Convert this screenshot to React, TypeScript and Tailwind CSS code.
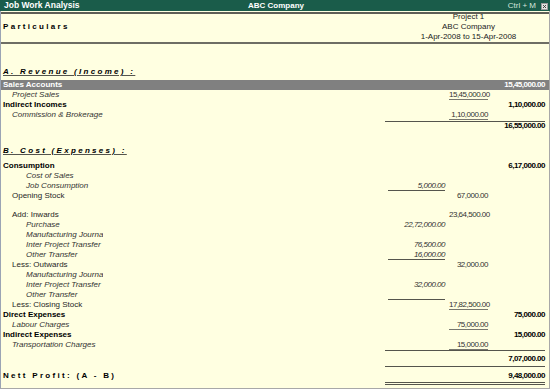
import React from "react";

type Kind = "group" | "item" | "plain";

interface RowData {
  label?: string;
  kind?: Kind;
  indent?: 0 | 1 | 2;
  c1?: string;
  c2?: string;
  c3?: string;
  line1?: boolean;
  line2?: boolean;
  clip?: boolean;
  bar?: boolean;
}

const indentClass = { 0: "pl-[2px]", 1: "pl-[11px]", 2: "pl-[25px]" };

const kindClass: Record<Kind, string> = {
  group: "font-bold text-black",
  item: "italic text-[#333]",
  plain: "text-[#262626]",
};

function Row({ r }: { r: RowData }) {
  const kind = r.kind ?? "item";
  return (
    <div className={`flex h-[10px] leading-[10px] ${r.bar ? "bg-[#808080] text-white" : ""}`}>
      <div
        className={`flex-1 min-w-0 overflow-hidden whitespace-nowrap ${indentClass[r.indent ?? 0]} ${
          r.bar ? "font-bold text-white" : kindClass[kind]
        }`}
      >
        {r.clip ? <span className="block w-[77px] overflow-hidden">{r.label}</span> : r.label}
      </div>
      <div
        className={`w-[57px] text-right tracking-[-0.5px] italic text-[#333] ${
          r.line1 ? "border-b border-[#55554d]" : ""
        }`}
      >
        {r.c1}
      </div>
      <div className="w-[4px]" />
      <div
        className={`w-[39px] text-right tracking-[-0.5px] text-[#333] ${
          r.line2 ? "border-b border-[#77776e]" : ""
        }`}
      >
        {r.c2}
      </div>
      <div className={`w-[57px] text-right tracking-[-0.5px] font-bold ${r.bar ? "text-white" : "text-black"}`}>
        {r.c3}
      </div>
      <div className="w-[4px]" />
    </div>
  );
}

function Rule() {
  return (
    <div className="flex">
      <div className="flex-1" />
      <div className="w-[160px] border-t border-[#55554d]" />
      <div className="w-[4px]" />
    </div>
  );
}

function Heading({ text }: { text: string }) {
  return (
    <div className="h-[10px] leading-[10px] pl-[2px] whitespace-nowrap">
      <span className="font-bold italic tracking-[2.3px] text-black underline underline-offset-[1px] decoration-[#55554d]">
        {text}
      </span>
    </div>
  );
}

const costRows: RowData[] = [
  { label: "Consumption", kind: "group", c3: "6,17,000.00" },
  { label: "Cost of Sales", indent: 2 },
  { label: "Job Consumption", indent: 2, c1: "5,000.00", line1: true },
  { label: "Opening Stock", kind: "plain", indent: 1, c2: "67,000.00" },
];

const moveRows: RowData[] = [
  { label: "Add: Inwards", kind: "plain", indent: 1, c2: "23,64,500.00" },
  { label: "Purchase", indent: 2, c1: "22,72,000.00" },
  { label: "Manufacturing Journal", indent: 2, clip: true },
  { label: "Inter Project Transfer", indent: 2, clip: true, c1: "76,500.00" },
  { label: "Other Transfer", indent: 2, c1: "16,000.00", line1: true },
  { label: "Less: Outwards", kind: "plain", indent: 1, c2: "32,000.00" },
  { label: "Manufacturing Journal", indent: 2, clip: true },
  { label: "Inter Project Transfer", indent: 2, clip: true, c1: "32,000.00" },
  { label: "Other Transfer", indent: 2, line1: true },
  { label: "Less: Closing Stock", kind: "plain", indent: 1, c2: "17,82,500.00", line2: true },
  { label: "Direct Expenses", kind: "group", c3: "75,000.00" },
  { label: "Labour Charges", indent: 1, c2: "75,000.00", line2: true },
  { label: "Indirect Expenses", kind: "group", c3: "15,000.00" },
  { label: "Transportation Charges", indent: 1, c2: "15,000.00", line2: true },
];

export default function App() {
  return (
    <div className="w-[550px] h-[389px] bg-[#ffffe1] text-[8px] font-['Liberation_Sans',Arial,sans-serif] overflow-hidden flex flex-col">
      {/* title bar */}
      <div className="flex h-[11px] leading-[11px] bg-[#1a5c4a] text-[8.5px] text-white">
        <div className="flex-1 pl-[4px] font-bold">Job Work Analysis</div>
        <div className="font-bold text-[8px]">ABC Company</div>
        <div className="flex-1 flex justify-end items-center gap-[5px] pr-[2px]">
          <span className="text-[8px] text-[#d6e4dc]">Ctrl + M</span>
          <svg width="7" height="7" viewBox="0 0 7 7" className="mt-[1px]">
            <rect x="0.5" y="0.5" width="6" height="6" fill="#e4e4e0" stroke="#9a9a9a" />
            <path d="M2 2 L5 5 M5 2 L2 5" stroke="#333" strokeWidth="0.9" />
          </svg>
        </div>
      </div>

      <div className="flex-1 flex flex-col border-x border-b border-l-[#9ba4b4] border-r-[#a8a8a8] border-b-[#a8a8a8]">
        <div className="h-[1px]" />
        <div className="h-[2px] bg-[#5e5e56]" />

        {/* report header */}
        <div className="flex -mt-[2px] leading-[10px] h-[30px]">
          <div className="flex-1 pl-[2px] pt-[10px] font-bold tracking-[2.3px] text-black">Particulars</div>
          <div className="w-[161px] text-center text-[#222]">
            <div>Project 1</div>
            <div>ABC Company</div>
            <div>1-Apr-2008 to 15-Apr-2008</div>
          </div>
        </div>
        <div className="h-[2px] bg-[#6e6e64]" />

        {/* revenue */}
        <div className="h-[23px]" />
        <Heading text="A. Revenue (Income) :" />
        <div className="h-[3px]" />
        <Row r={{ label: "Sales Accounts", kind: "group", bar: true, c3: "15,45,000.00" }} />
        <Row r={{ label: "Project Sales", indent: 1, c2: "15,45,000.00", line2: true }} />
        <Row r={{ label: "Indirect Incomes", kind: "group", c3: "1,10,000.00" }} />
        <Row r={{ label: "Commission & Brokerage", indent: 1, c2: "1,10,000.00", line2: true }} />
        <div className="h-[1px]" />
        <Rule />
        <div className="flex h-[8px] leading-[8px]">
          <div className="flex-1" />
          <div className="w-[57px] text-right tracking-[-0.5px] font-bold text-black">16,55,000.00</div>
          <div className="w-[4px]" />
        </div>

        {/* cost */}
        <div className="h-[16px]" />
        <Heading text="B. Cost (Expenses) :" />
        <div className="h-[5px]" />
        {costRows.map((r, i) => (
          <Row key={"c" + i} r={r} />
        ))}
        <div className="h-[9px]" />
        {moveRows.map((r, i) => (
          <Row key={"m" + i} r={r} />
        ))}
        <Rule />
        <div className="h-[3px]" />
        <Row r={{ c3: "7,07,000.00" }} />
        <div className="h-[2px]" />
        <Rule />
        <div className="h-[4px]" />
        <div className="flex h-[10px] leading-[10px]">
          <div className="flex-1 pl-[2px] font-bold tracking-[2.3px] text-black whitespace-nowrap">
            Nett Profit: (A - B)
          </div>
          <div className="w-[57px] text-right tracking-[-0.5px] font-bold text-black">9,48,000.00</div>
          <div className="w-[4px]" />
        </div>
        <div className="h-[1px]" />
        <div className="flex">
          <div className="flex-1" />
          <div className="w-[160px] h-[3px] border-y border-[#55554d]" />
          <div className="w-[4px]" />
        </div>
      </div>
    </div>
  );
}
